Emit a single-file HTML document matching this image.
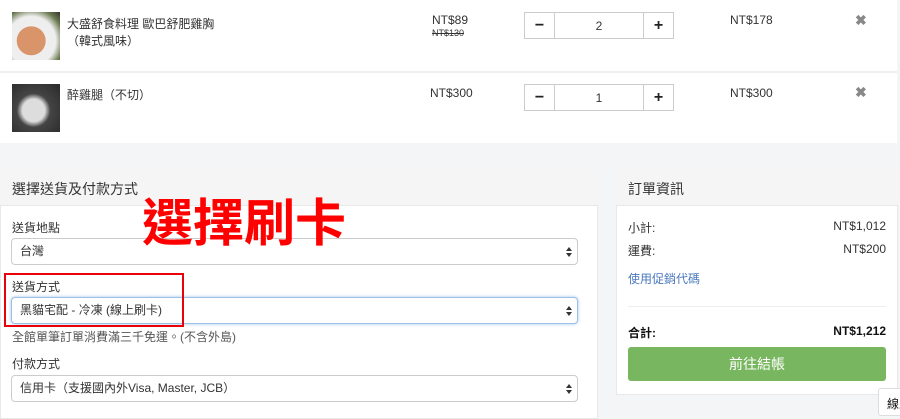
<!DOCTYPE html>
<html><head><meta charset="utf-8"><style>
*{margin:0;padding:0;box-sizing:border-box}
body{width:900px;height:414px;overflow:hidden;background:#f4f5f7;font-family:"Liberation Sans","Noto Sans CJK TC",sans-serif;color:#333;font-size:12px;position:relative}
.a{position:absolute;white-space:nowrap}
.img{position:absolute;width:48px;height:48px}
.qty{position:absolute;width:150px;height:27px;border:1px solid #ccc;background:#fff;display:flex}
.qty div{display:flex;align-items:center;justify-content:center}
.qb{width:29px;font-weight:bold;font-size:16px;color:#222}
.qm{flex:1;border-left:1px solid #ccc;border-right:1px solid #ccc;font-size:12px}
.sel{position:absolute;left:11px;width:567px;height:27px;border:1px solid #ccc;border-radius:4px;background:#fff;padding:0 0 0 8px;line-height:25px;font-size:12px;color:#333}
.sel:after{content:"";position:absolute;right:5px;top:8px;width:0;height:0;border:3px solid transparent;border-bottom:4px solid #333;border-top:none}
.sel:before{content:"";position:absolute;right:5px;top:14px;border:3px solid transparent;border-top:4px solid #333;border-bottom:none}
.lbl{position:absolute;left:12px;font-size:12px;color:#333;white-space:nowrap}
</style></head><body>
<div class="a" style="left:0;top:0;width:897px;height:143px;background:#fff"></div>
<div class="a" style="left:0;top:71px;width:897px;height:2px;background:#eef0f2"></div>
<div class="img" style="left:12px;top:12px;background:radial-gradient(circle at 40% 60%,#d9946a 0 35%,#eee 36% 60%,#6a7a50 80%,#333)"></div>
<div class="img" style="left:12px;top:84px;background:radial-gradient(ellipse at 45% 55%,#ddd 0 30%,#444 45%,#2a2a2a)"></div>
<div class="a" style="left:67px;top:16px;font-size:12px;line-height:17px">大盛舒食料理 歐巴舒肥雞胸<br>（韓式風味）</div>
<div class="a" style="left:67px;top:86px;font-size:12px">醉雞腿（不切）</div>
<div class="a" style="left:432px;top:13px;font-size:12px">NT$89</div>
<div class="a" style="left:432px;top:28px;font-size:9px;text-decoration:line-through">NT$130</div>
<div class="a" style="left:430px;top:86px;font-size:12px">NT$300</div>
<div class="qty" style="left:524px;top:12px"><div class="qb">−</div><div class="qm">2</div><div class="qb">+</div></div>
<div class="qty" style="left:524px;top:84px"><div class="qb">−</div><div class="qm">1</div><div class="qb">+</div></div>
<div class="a" style="left:730px;top:13px;font-size:12px">NT$178</div>
<div class="a" style="left:730px;top:86px;font-size:12px">NT$300</div>
<div class="a" style="left:855px;top:12px;font-size:14px;color:#888;font-weight:bold">✖</div>
<div class="a" style="left:855px;top:84px;font-size:14px;color:#888;font-weight:bold">✖</div>

<div class="a" style="left:0;top:169px;width:598px;height:250px;background:#fff;border:1px solid #e8e8e8"></div>
<div class="a" style="left:0;top:169px;width:598px;height:37px;background:#f5f5f5;border-bottom:1px solid #e8e8e8"></div>
<div class="a" style="left:12px;top:179px;font-size:14px">選擇送貨及付款方式</div>
<div class="lbl" style="top:219px">送貨地點</div>
<div class="sel" style="top:238px">台灣</div>
<div class="lbl" style="top:278px">送貨方式</div>
<div class="sel" style="top:297px;border-color:#9ec0e6;box-shadow:0 0 3px #9ec0e6">黑貓宅配 - 冷凍 (線上刷卡)</div>
<div class="a" style="left:4px;top:273px;width:180px;height:54px;border:2px solid #e8000b"></div>
<div class="lbl" style="top:328px;color:#555">全館單筆訂單消費滿三千免運。(不含外島)</div>
<div class="lbl" style="top:355px">付款方式</div>
<div class="sel" style="top:375px">信用卡（支援國內外Visa, Master, JCB）</div>
<div class="a" style="left:142px;top:192px;font-size:51px;line-height:64px;color:#f00;font-weight:bold">選擇刷卡</div>

<div class="a" style="left:616px;top:169px;width:282px;height:226px;background:#fff;border:1px solid #e8e8e8"></div>
<div class="a" style="left:616px;top:169px;width:282px;height:37px;background:#f5f5f5;border-bottom:1px solid #e8e8e8"></div>
<div class="a" style="left:628px;top:179px;font-size:14px">訂單資訊</div>
<div class="a" style="left:628px;top:219px">小計:</div>
<div class="a" style="right:14px;top:219px">NT$1,012</div>
<div class="a" style="left:628px;top:242px">運費:</div>
<div class="a" style="right:14px;top:242px">NT$200</div>
<div class="a" style="left:628px;top:270px;color:#4a78bd">使用促銷代碼</div>
<div class="a" style="left:628px;top:306px;width:258px;height:1px;background:#eee"></div>
<div class="a" style="left:628px;top:324px;font-weight:bold;color:#111">合計:</div>
<div class="a" style="right:14px;top:324px;font-weight:bold;color:#111">NT$1,212</div>
<div class="a" style="left:628px;top:347px;width:258px;height:34px;background:#78b660;border-radius:3px;color:#fff;font-size:14px;text-align:center;line-height:34px">前往結帳</div>
<div class="a" style="left:878px;top:388px;width:40px;height:28px;background:#fff;border:1px solid #ddd;border-radius:3px;padding:6px 0 0 8px;font-size:12px;color:#111">線上</div>
</body></html>
